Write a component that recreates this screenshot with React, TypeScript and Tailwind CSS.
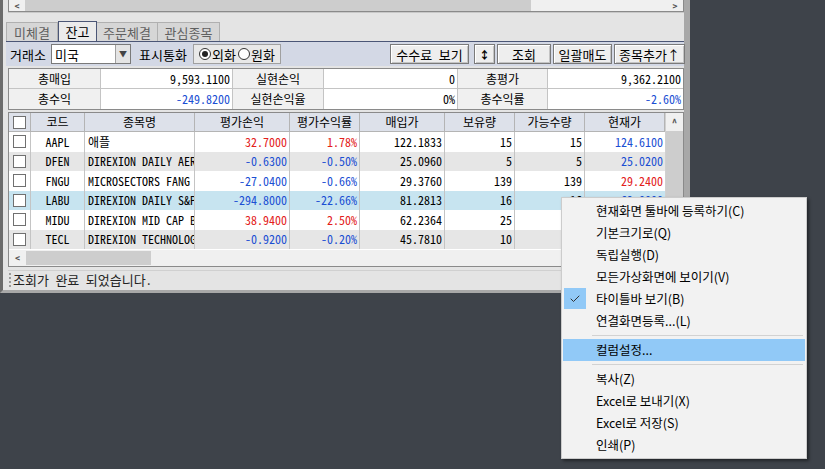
import { Check } from 'lucide-react';

const RED = 'text-[#e3201b]';
const BLUE = 'text-[#1b4fd3]';

const rows = [
  { code: 'AAPL', name: '애플', pl: '32.7000', rate: '1.78%', buy: '122.1833', qty: '15', avail: '15', cur: '124.6100', plc: RED, curc: BLUE, bg: 'bg-white' },
  { code: 'DFEN', name: 'DIREXION DAILY AEROSPACE', pl: '-0.6300', rate: '-0.50%', buy: '25.0960', qty: '5', avail: '5', cur: '25.0200', plc: BLUE, curc: BLUE, bg: 'bg-[#e6e6e6]' },
  { code: 'FNGU', name: 'MICROSECTORS FANG INNOVATION', pl: '-27.0400', rate: '-0.66%', buy: '29.3760', qty: '139', avail: '139', cur: '29.2400', plc: BLUE, curc: RED, bg: 'bg-white' },
  { code: 'LABU', name: 'DIREXION DAILY S&P BIOTECH', pl: '-294.8000', rate: '-22.66%', buy: '81.2813', qty: '16', avail: '16', cur: '62.0000', plc: BLUE, curc: BLUE, bg: 'bg-[#c7e4f0]' },
  { code: 'MIDU', name: 'DIREXION MID CAP BULL', pl: '38.9400', rate: '2.50%', buy: '62.2364', qty: '25', avail: '25', cur: '63.1000', plc: RED, curc: RED, bg: 'bg-white' },
  { code: 'TECL', name: 'DIREXION TECHNOLOGY BULL', pl: '-0.9200', rate: '-0.20%', buy: '45.7810', qty: '10', avail: '10', cur: '45.5000', plc: BLUE, curc: BLUE, bg: 'bg-[#e6e6e6]' },
];

const cols = 'grid grid-cols-[22px_54px_110px_95px_70px_85px_70px_70px_80px]';

const menu: (string | null)[] = [
  '현재화면 툴바에 등록하기(C)',
  '기본크기로(Q)',
  '독립실행(D)',
  '모든가상화면에 보이기(V)',
  '타이틀바 보기(B)',
  '연결화면등록...(L)',
  null,
  '컬럼설정...',
  null,
  '복사(Z)',
  'Excel로 보내기(X)',
  'Excel로 저장(S)',
  '인쇄(P)',
];

function Box() {
  return <span className="block w-[13px] h-[13px] bg-white border border-[#707070]" />;
}

function Btn({ children, w }: { children: React.ReactNode; w: string }) {
  return (
    <div className={`${w} h-[20px] flex items-center justify-center bg-[#eeeeee] border border-[#7a7a7a] shadow-[inset_1px_1px_0_#ffffff,inset_-1px_-1px_0_#c4c4c4]`}>
      {children}
    </div>
  );
}

function Radio({ on }: { on?: boolean }) {
  return (
    <span className="w-[12px] h-[12px] rounded-full border border-[#333] bg-white flex items-center justify-center">
      {on && <span className="w-[6px] h-[6px] rounded-full bg-[#222]" />}
    </span>
  );
}

export default function App() {
  return (
    <div className="relative w-[825px] h-[469px] bg-[#3e434a] overflow-hidden font-['Noto_Sans_Mono_CJK_KR','Noto_Sans_CJK_KR',sans-serif] text-[12px] text-black leading-none">
      {/* window */}
      <div className="w-[690px] h-[293px] flex flex-col bg-[#e4e4e4] border-l-[3px] border-l-[#6b6b6b] border-r-[6px] border-r-[#a8a8a8] border-b-[3px] border-b-[#a8a8a8]">
        {/* top scrollbar */}
        <div className="ml-[5px] w-[676px] h-[12px] flex border-l border-b border-r border-[#8a8a8a] bg-[#f0f0f0]">
          <div className="w-[16px] flex items-center justify-center text-[10px] text-[#555] font-bold">&lt;</div>
          <div className="w-[506px] bg-[#cdcdcd]" />
          <div className="flex-1" />
          <div className="w-[16px] flex items-center justify-center text-[10px] text-[#555] font-bold">&gt;</div>
        </div>
        <div className="h-[9px] ml-[5px] w-[676px] border-t border-[#c8c8c8]" />
        {/* tabs */}
        <div className="h-[20px] pl-[3px] flex items-end">
          <div className="w-[52px] h-[19px] flex items-center justify-center bg-[#d6d6d6] border border-b-0 border-[#b0b0b0] text-[#606060] text-[13px]">미체결</div>
          <div className="w-[39px] h-[20px] flex items-center justify-center bg-[#ebebeb] border border-b-0 border-[#4b5676] text-[13px]">잔고</div>
          <div className="w-[61px] h-[19px] flex items-center justify-center bg-[#d6d6d6] border border-b-0 border-l-0 border-[#b0b0b0] text-[#606060] text-[13px]">주문체결</div>
          <div className="w-[62px] h-[19px] flex items-center justify-center bg-[#d6d6d6] border border-b-0 border-l-0 border-[#b0b0b0] text-[#606060] text-[13px]">관심종목</div>
        </div>
        {/* toolbar */}
        <div className="h-[25px] ml-[3px] flex items-center bg-[#d3d8e5] border-t border-[#4b5676] text-[13px]">
          <span className="ml-[4px] w-[40px]">거래소</span>
          <div className="ml-[1px] w-[80px] h-[20px] flex bg-white border border-[#7a7a7a]">
            <span className="flex-1 pl-[3px] flex items-center">미국</span>
            <span className="w-[15px] bg-[#e4e4e4] border-l border-[#a0a0a0] flex items-center justify-center text-[8px] text-[#444]">▼</span>
          </div>
          <span className="ml-[8px] w-[54px]">표시통화</span>
          <div className="w-[88px] h-[20px] flex items-center gap-[1px] pl-[5px] bg-[#e8e8e8] border border-[#a0a0a0]">
            <Radio on />
            <span className="mr-[1px]">외화</span>
            <Radio />
            <span>원화</span>
          </div>
          <div className="ml-auto flex items-center gap-[2px] mr-[-1px]">
            <Btn w="w-[79px]">수수료 보기</Btn>
            <span className="w-[1px]" />
            <Btn w="w-[21px]">
              <span className="text-[11px] font-bold">↕</span>
            </Btn>
            <Btn w="w-[54px]">조회</Btn>
            <Btn w="w-[59px]">일괄매도</Btn>
            <Btn w="w-[71px]">종목추가↑</Btn>
          </div>
        </div>
        {/* summary */}
        <div className="ml-[5px] mt-[2px] w-[676px] grid grid-cols-[92px_132px_91px_134px_90px_1fr] border border-[#8a8a8a] bg-white">
          {[
            ['총매입', '9,593.1100', '', '실현손익', '0', '', '총평가', '9,362.2100', ''],
            ['총수익', '-249.8200', BLUE, '실현손익율', '0%', '', '총수익률', '-2.60%', BLUE],
          ].map((r, i) => (
            <div key={i} className="contents">
              {[0, 3, 6].map((k) => (
                <div key={k} className="contents">
                  <div className={`h-[20px] flex items-center justify-center bg-[#f0f0f0] border-r border-[#c4c4c4] ${i === 0 ? 'border-b' : ''}`}>{r[k]}</div>
                  <div className={`h-[20px] flex items-center justify-end pr-[2px] border-[#c4c4c4] ${k < 6 ? 'border-r' : ''} ${i === 0 ? 'border-b' : ''} ${r[k + 2]}`}>{r[k + 1]}</div>
                </div>
              ))}
            </div>
          ))}
        </div>
        {/* grid */}
        <div className="ml-[5px] mt-[2px] w-[676px] flex flex-col border border-[#8a8a8a] bg-[#f0f0f0]">
          <div className="flex">
            <div className="flex flex-col">
              <div className={`${cols} h-[19px] bg-[#dde1ea] border-b border-[#b4b4b4]`}>
                <div className="flex items-center justify-center border-r border-[#b4b4b4]"><Box /></div>
                {['코드', '종목명', '평가손익', '평가수익률', '매입가', '보유량', '가능수량', '현재가'].map((h) => (
                  <div key={h} className="flex items-center justify-center border-r border-[#b4b4b4]">{h}</div>
                ))}
              </div>
              {rows.map((r) => (
                <div key={r.code} className={`${cols} h-[19.5px] ${r.bg}`}>
                  <div className="flex items-center justify-center border-r border-[#c4c4c4]"><Box /></div>
                  <div className="flex items-center justify-center border-r border-[#c4c4c4]">{r.code}</div>
                  <div className="flex items-center pl-[3px] border-r border-[#c4c4c4] overflow-hidden whitespace-nowrap">{r.name}</div>
                  <div className={`flex items-center justify-end pr-[2px] border-r border-[#c4c4c4] ${r.plc}`}>{r.pl}</div>
                  <div className={`flex items-center justify-end pr-[2px] border-r border-[#c4c4c4] ${r.plc}`}>{r.rate}</div>
                  <div className="flex items-center justify-end pr-[2px] border-r border-[#c4c4c4]">{r.buy}</div>
                  <div className="flex items-center justify-end pr-[2px] border-r border-[#c4c4c4]">{r.qty}</div>
                  <div className="flex items-center justify-end pr-[2px] border-r border-[#c4c4c4]">{r.avail}</div>
                  <div className={`flex items-center justify-end pr-[2px] ${r.curc}`}>{r.cur}</div>
                </div>
              ))}
            </div>
            {/* vertical scrollbar */}
            <div className="flex-1 flex flex-col bg-[#f0f0f0] border-l border-[#d0d0d0]">
              <div className="h-[18px] flex items-center justify-center text-[#555] text-[10px] font-bold">^</div>
              <div className="flex-1 bg-[#cdcdcd]" />
            </div>
          </div>
          {/* horizontal scrollbar */}
          <div className="h-[17px] flex border-t border-white bg-[#f0f0f0]">
            <div className="w-[17px] flex items-center justify-center text-[10px] text-[#555] font-bold">&lt;</div>
            <div className="w-[125px] my-[1px] bg-[#cdcdcd]" />
          </div>
        </div>
        {/* status bar */}
        <div className="mt-[3px] ml-[5px] flex-1 flex items-center pb-[2px] border-t border-[#d0d0d0] text-[13px] text-[#222]">
          <span className="ml-[1px] w-[2px] h-[14px] border-l-2 border-dotted border-[#9a9a9a]" />
          <span className="ml-[2px]">조회가 완료 되었습니다.</span>
        </div>
      </div>

      {/* context menu */}
      <div className="absolute left-[561px] top-[197px] w-[246px] py-[2px] px-[1px] bg-[#f2f2f2] border border-[#cccccc] shadow-[2px_2px_3px_rgba(0,0,0,0.45)] font-['Noto_Sans_CJK_KR',sans-serif] text-[12.5px]">
        {menu.map((m, i) =>
          m === null ? (
            <div key={i} className="h-[7px] flex items-center pl-[29px] pr-[2px]">
              <div className="w-full h-[1px] bg-[#d2d2d2]" />
            </div>
          ) : (
            <div key={i} className={`h-[22px] flex items-center relative ${m === '컬럼설정...' ? 'bg-[#91c9f7]' : ''}`}>
              {m.startsWith('타이틀바') && (
                <span className="absolute left-[1px] top-0 w-[22px] h-[21px] bg-[#91c9f7] flex items-center justify-center">
                  <Check className="w-[12px] h-[12px] text-[#333]" strokeWidth={2} />
                </span>
              )}
              <span className="pl-[33px]">{m}</span>
            </div>
          )
        )}
      </div>
    </div>
  );
}
